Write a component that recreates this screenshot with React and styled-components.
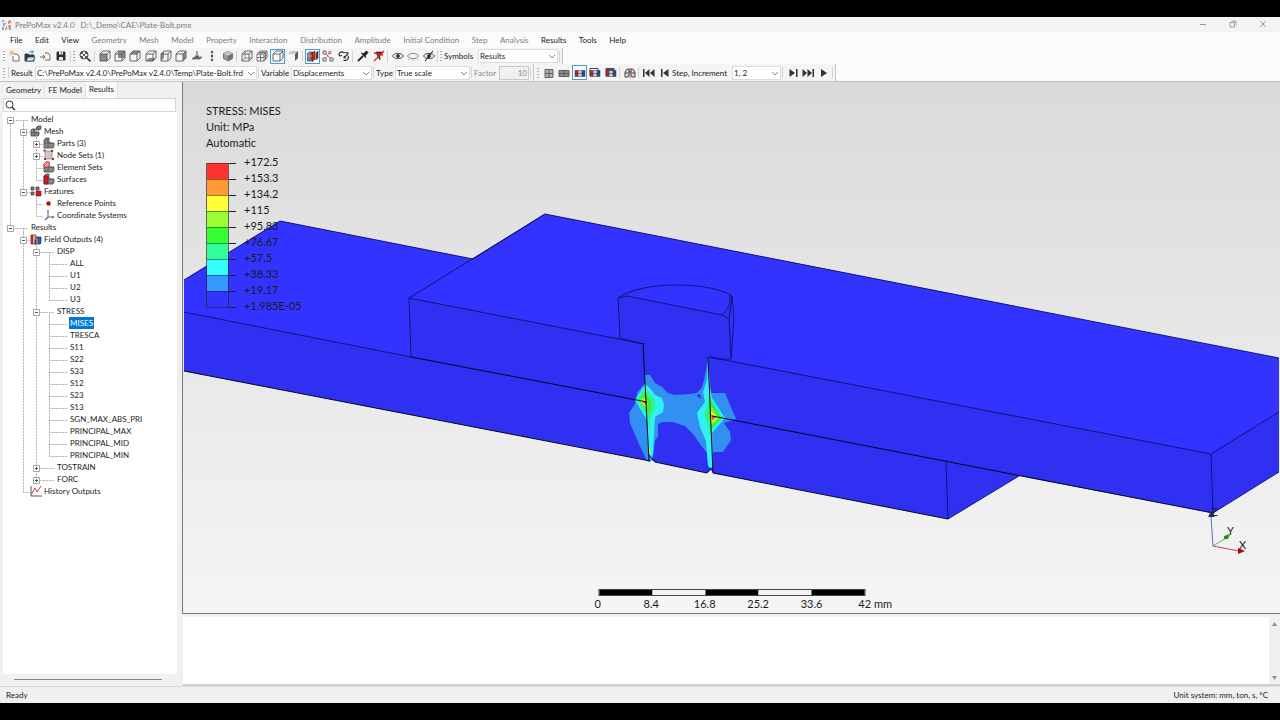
import React, { useState } from 'react';
import styled, { createGlobalStyle, css } from 'styled-components';

const GlobalStyle = createGlobalStyle`
  * {
    box-sizing: border-box;
  }

  body {
    margin: 0;
    background: #000;
  }

  body, button, input, select, textarea {
    font-family: Lato, "Open Sans", sans-serif;
    font-size: 8px;
    line-height: 12px;
    color: #1c1c1c;
  }
`;

const StyledPage = styled.div`
  min-height: 100vh;
  padding: 17px 0;
  display: flex;
  flex-direction: column;
  background: #000;
`;

const StyledWindow = styled.div`
  flex: 1;
  display: flex;
  flex-direction: column;
  background: #f0f0f0;
`;

/* title bar */

const StyledTitleBar = styled.header`
  height: 15px;
  padding: 0 2px;
  display: flex;
  align-items: center;
  background: #f3f3f3;
  color: #7c7c7c;
`;

const StyledTitle = styled.span`
  margin: 0 6px 0 3px;
  white-space: nowrap;
`;

const StyledWindowButtons = styled.div`
  margin-left: auto;
  display: flex;
`;

const StyledWindowButton = styled.button`
  width: 30px;
  height: 15px;
  padding: 0 0 2px;
  display: flex;
  align-items: center;
  justify-content: center;
  border: 0;
  background: none;
`;

/* menu */

const StyledMenuBar = styled.nav`
  height: 16px;
  padding: 0 4px;
  display: flex;
  align-items: center;
  background: #fbfbfb;
`;

const StyledMenuList = styled.div`
  width: 628px;
  display: flex;
  justify-content: space-between;
`;

const StyledMenuItem = styled.button`
  padding: 0 6px;
  border: 0;
  background: none;
  white-space: nowrap;
  color: #1c1c1c;

  &:disabled {
    color: #7d7d7d;
  }
`;

/* tool bars */

const StyledToolRow = styled.div`
  height: ${(props) => props.$height}px;
  display: flex;
  background: #fbfbfb;
`;

const StyledToolStrip = styled.div`
  display: flex;
  align-items: center;
  padding-left: 3px;
  background: #f4f4f4;
  border-right: 1px solid #c4c4c4;
`;

const StyledGrip = styled.span`
  width: 2px;
  height: 10px;
  margin: 0 2px 0 0;
  background: repeating-linear-gradient(#a8a8a8 0 1px, transparent 1px 3px);
`;

const StyledDivider = styled.span`
  width: 1px;
  height: 11px;
  margin: 0 2px 0 1px;
  background: #d2d2d2;
`;

const StyledGroup = styled.div`
  width: ${(props) => props.$width}px;
  display: flex;
  align-items: center;
  justify-content: space-between;
`;

const StyledToolButton = styled.button`
  width: 15px;
  height: 15px;
  padding: 0;
  display: flex;
  align-items: center;
  justify-content: center;
  border: 1px solid transparent;
  background: none;

  ${(props) =>
    props.$active &&
    css`
      border-color: #4a9fd0;
      background: #f4fafd;
    `}
`;

const StyledField = styled.label`
  display: flex;
  align-items: center;
  white-space: nowrap;
  color: ${(props) => (props.$muted ? '#8a8a8a' : '#1c1c1c')};
`;

const StyledFieldName = styled.span`
  width: ${(props) => props.$width}px;
`;

const StyledSelectBox = styled.span`
  width: ${(props) => props.$width}px;
  display: grid;
  align-items: center;

  > * {
    grid-area: 1 / 1;
  }

  > svg {
    justify-self: end;
    margin-right: 2px;
    pointer-events: none;
  }
`;

const StyledSelect = styled.select`
  width: 100%;
  height: 14px;
  padding: 0 8px 0 1px;
  appearance: none;
  border: 1px solid #dcdcdc;
  border-radius: 0;
  background: #fff;
`;

const StyledNumber = styled.input`
  width: 30px;
  height: 14px;
  padding: 0 1px;
  border: 1px solid #c8c8c8;
  background: #f0f0f0;
  text-align: right;
  color: #8a8a8a;
`;

/* main area */

const StyledMain = styled.main`
  flex: 1;
  min-height: 0;
  display: flex;
  border-top: 1px solid #c2c2c2;
`;

const StyledSide = styled.aside`
  width: 182px;
  padding: 0 5px 2px 3px;
  display: flex;
  flex-direction: column;
`;

const StyledTabs = styled.div`
  height: 16px;
  display: flex;
  align-items: flex-end;
`;

const StyledTab = styled.button`
  height: ${(props) => (props.$active ? 16 : 14)}px;
  padding: 0 3px ${(props) => (props.$active ? 3 : 2)}px;
  border: 0;
  border-right: 1px solid #e0e0e0;
  background: ${(props) => (props.$active ? '#fafafa' : '#f2f2f2')};
  white-space: nowrap;
`;

const StyledSearch = styled.label`
  height: 14px;
  padding: 0 1px;
  display: flex;
  align-items: center;
  background: #fff;
  border: 1px solid #d6d6d6;
  margin-right: 1px;
`;

const StyledSearchInput = styled.input`
  flex: 1;
  min-width: 0;
  height: 12px;
  border: 0;
  outline: 0;
  background: none;
`;

const StyledTree = styled.div`
  flex: 1;
  padding: 1px 0 0 1px;
  background: #fff;
`;

const StyledTreeRow = styled.div`
  height: 12px;
  display: flex;
`;

const down = 'repeating-linear-gradient(#b8b8b8 0 2px, #ececec 2px 3px)';
const across = 'repeating-linear-gradient(90deg, #b8b8b8 0 2px, #ececec 2px 3px)';

const guides = {
  none: 'none',
  through: `${down} 6px 0 / 1px 12px no-repeat`,
  tee: `${down} 6px 0 / 1px 12px no-repeat, ${across} 6px 7px / 7px 1px no-repeat`,
  end: `${down} 6px 0 / 1px 7px no-repeat, ${across} 6px 7px / 7px 1px no-repeat`,
  start: `${down} 6px 7px / 1px 5px no-repeat, ${across} 6px 7px / 7px 1px no-repeat`,
  stub: `${across} 0 7px / 11px 1px no-repeat`,
  stubDown: `${across} 0 7px / 11px 1px no-repeat, ${down} 6px 7px / 1px 5px no-repeat`,
};

const StyledGuide = styled.span`
  width: 13px;
  display: flex;
  justify-content: center;
  align-items: flex-end;
  padding-bottom: 1px;
  background: ${(props) => guides[props.$kind]};
`;

const StyledSlot = styled.span`
  width: 14px;
  display: flex;
  align-items: center;
  background: ${(props) => guides[props.$kind]};
`;

const StyledToggle = styled.button`
  width: 7px;
  height: 7px;
  padding: 0;
  display: flex;
  border: 0;
  background: #fff;
`;

const StyledTreeLabel = styled.button`
  height: 12px;
  padding: 0 1px;
  margin-left: -1px;
  border: 0;
  line-height: 11px;
  white-space: nowrap;
  background: ${(props) => (props.$selected ? '#0078d4' : 'none')};
  color: ${(props) => (props.$selected ? '#fff' : '#1c1c1c')};
`;

const StyledTreeScroll = styled.div`
  height: 10px;
  padding: 5px 15px 0 11px;
  background: #f1f1f1;

  &::before {
    content: "";
    display: block;
    height: 1px;
    background: #858585;
  }
`;

const StyledContent = styled.div`
  flex: 1;
  min-width: 0;
  display: flex;
  flex-direction: column;
`;

const StyledViewport = styled.section`
  flex: 1;
  min-height: 0;
  position: relative;
  display: flex;
  overflow: hidden;
  border-left: 1px solid #7a7a7a;
  border-bottom: 1px solid #7a7a7a;
  background: linear-gradient(#dadada, #f5f5f5);
  font-size: 11px;
  line-height: 16px;
`;

const StyledScene = styled.svg`
  width: 100%;
  height: auto;
  aspect-ratio: 1097 / 531;
`;

const StyledLegend = styled.div`
  position: absolute;
  left: 23px;
  top: 21px;
`;

const StyledLegendScale = styled.div`
  margin-top: 3px;
  display: flex;
`;

const StyledBands = styled.div`
  width: 23px;
  margin-top: 9px;
  align-self: flex-start;
  border: 1px solid #222a;
  border-top: 0;
`;

const StyledBand = styled.div`
  height: 16px;
  border-top: 1px solid #2228;
  background: ${(props) => props.$color};
`;

const StyledTicks = styled.div`
  width: 7px;
  margin: 9px 8px 0 0;
  align-self: flex-start;
`;

const StyledTick = styled.div`
  height: 16px;
  border-top: 1px solid #222;

  &:last-child {
    height: 1px;
  }
`;

const StyledLegendLabel = styled.div`
  height: 16px;
  color: #1a1a1a;
`;

const StyledRuler = styled.div`
  position: absolute;
  left: 50%;
  bottom: 1px;
  width: 267px;
  transform: translateX(-50%);
`;

const StyledRulerBar = styled.div`
  display: flex;
  height: 7px;
  border: 1px solid #444;
`;

const StyledRulerPart = styled.span`
  flex: 1;
  background: ${(props) => (props.$dark ? '#000' : '#f3f3f3')};
`;

const StyledRulerLabels = styled.div`
  display: flex;
  margin: 0 -27px;
`;

const StyledRulerLabel = styled.span`
  flex: 1;
  text-align: center;
  white-space: nowrap;

  &:last-child {
    text-indent: 20px;
    text-align: left;
  }
`;

const StyledLog = styled.div`
  height: 72px;
  padding: 3px 0 0 1px;
  display: flex;
`;

const StyledLogText = styled.textarea`
  flex: 1;
  border: 0;
  border-bottom: 2px solid #cfcfcf;
  resize: none;
  outline: 0;
  background: #fff;
`;

const StyledLogScroll = styled.div`
  width: 11px;
  padding: 4px 0 3px;
  display: flex;
  flex-direction: column;
  align-items: center;
  justify-content: space-between;
  border-bottom: 2px solid #cfcfcf;
  background: #f0f0f0;
`;

const StyledStatus = styled.footer`
  height: 17px;
  padding: 0 12px 0 6px;
  display: flex;
  justify-content: space-between;
  line-height: 16px;
  border-top: 1px solid #d9d9d9;
  background: #f0f0f0;
`;

/* icons */

const Icon = ({ size = 12, children }) => (
  <svg width={size} height={size} viewBox="0 0 12 12" fill="none" stroke="#585858" strokeWidth="0.9">
    {children}
  </svg>
);

const faces = {
  front: '1,4 8,4 8,11 1,11',
  back: '4,1 11,1 11,8 4,8',
  top: '1,4 4,1 11,1 8,4',
  bottom: '1,11 4,8 11,8 8,11',
  left: '1,4 4,1 4,8 1,11',
  right: '8,4 11,1 11,8 8,11',
};

const Cube = ({ face, hidden }) => (
  <Icon>
    {face && <polygon points={faces[face]} fill="#8b8b8b" stroke="none" />}
    {hidden && <path d="M4 1v7h7M4 8l-3 3" strokeWidth="0.7" />}
    <path d="M1 4h7v7H1zM1 4l3-3h7v7l-3 3M8 4l3-3" />
  </Icon>
);

const NewIcon = () => (
  <Icon>
    <path d="M5 4h3l2 2v5H4V6" fill="#fff" />
    <path d="M3 0v5M0 3h5M1 1l4 4M5 1L1 5" stroke="#e8a33d" strokeWidth="0.7" />
  </Icon>
);

const OpenIcon = () => (
  <Icon>
    <path d="M1 4h3l1 1h5v6H1z" fill="#2e3942" stroke="#2e3942" />
    <path d="M2 11l2-4h7l-2 4z" fill="#d7e3ea" stroke="#2e3942" strokeWidth="0.7" />
    <path d="M5 3c1-2 3-2 4-1M9 0v3H7" stroke="#2b8fc9" />
  </Icon>
);

const ImportIcon = () => (
  <Icon>
    <path d="M5 3h3l2 2v5H5M0 7h5M3 5l2 2-2 2" />
  </Icon>
);

const SaveIcon = () => (
  <Icon>
    <path d="M2 2h8v8H2z" fill="#2c2c2c" stroke="#2c2c2c" />
    <path d="M4 1.500h4v3H4zM4 7h4v3H4z" fill="#e9e9e9" stroke="none" />
    <path d="M6.500 2v2" strokeWidth="0.8" />
  </Icon>
);

const ZoomIcon = () => (
  <Icon>
    <circle cx="5" cy="5" r="4" stroke="#333" />
    <path d="M8 8l3.500 3.500" stroke="#333" strokeWidth="1.600" />
    <path d="M2.500 4V2.500H4M6 2.500h1.500V4M7.500 6v1.500H6M4 7.500H2.500V6M3 3l4 4M7 3L3 7" stroke="#333" strokeWidth="0.8" />
  </Icon>
);

const NormalIcon = () => (
  <Icon>
    <path d="M1 9l2-2h8l-2 2z" fill="#777" strokeWidth="0.7" />
    <path d="M6 1v6M4.500 5.500L6 7.500l1.500-2" stroke="#333" />
  </Icon>
);

const VerticalIcon = () => (
  <Icon>
    <path d="M5 1h2v2H5zM5 5h2v2H5zM5 9h2v2H5z" fill="#4a4a4a" stroke="none" />
    <path d="M6 1v10" strokeWidth="0.500" />
  </Icon>
);

const IsoIcon = () => (
  <Icon>
    <path d="M6 1l4.500 2.500v5L6 11 1.500 8.500v-5z" fill="#9a9a9a" strokeWidth="0.7" />
    <path d="M6 1l4.500 2.500L6 6 1.500 3.500z" fill="#c4c4c4" stroke="none" />
    <path d="M6 6l4.500-2.500v5L6 11z" fill="#707070" stroke="none" />
  </Icon>
);

const MeshCubeIcon = () => (
  <Icon>
    <path d="M1 4h7v7H1zM1 4l3-3h7v7l-3 3M8 4l3-3M4.500 4v7M1 7.500h7M2.500 2.500h7v7M4.500 4l3-3M8 7.500l3-3" strokeWidth="0.8" />
  </Icon>
);

const ShadedIcon = () => (
  <Icon>
    <path d="M1 4l3-3h7L8 4z" fill="#c9c9c9" stroke="none" />
    <path d="M8 4l3-3v7l-3 3z" fill="#5c5c5c" stroke="none" />
    <path d="M1 4h7v7H1z" fill="#f6f6f6" stroke="none" />
  </Icon>
);

const SectionIcon = () => (
  <Icon>
    <path d="M0 4l2-2h4v7l-2 2H0z" fill="#6c6c6c" stroke="#444" strokeWidth="0.600" />
    <path d="M5 3l3-2v8l-3 3z" fill="#cf2020" stroke="#7d1010" strokeWidth="0.600" />
    <path d="M9 3l2-2v7l-2 2z" fill="#7d2020" stroke="#444" strokeWidth="0.600" />
    <path d="M2 2v9M0 6h5" stroke="#ddd" strokeWidth="0.500" />
  </Icon>
);

const ExplodedIcon = () => (
  <Icon>
    <path d="M1 1h3v3H1zM1 8h3v3H1zM8 8h3v3H8z" />
    <path d="M4 4l4 4M4.500 7.500L7 3M7 1.500h2v2H7z" stroke="#c33" strokeWidth="0.700" />
  </Icon>
);

const LinkIcon = () => (
  <Icon>
    <path d="M1.500 6C0 3 3 1 5.500 2.500M1.500 6L4 5.500M5.500 2.500L10 3C10 6 7 5.500 5.500 7.500M10 6c1.500 3-2 5.500-4.500 4M5.500 7.500L8 8" stroke="#222" strokeWidth="1.100" />
  </Icon>
);

const PickerIcon = () => (
  <Icon>
    <path d="M1 11l5-5" stroke="#222" strokeWidth="1.800" />
    <path d="M6 4l2 2 3-3.500L9.500 1z" fill="#222" stroke="#222" />
    <path d="M4.500 3l4.500 4.500" stroke="#222" strokeWidth="1.300" />
  </Icon>
);

const PickerOffIcon = () => (
  <Icon>
    <path d="M3 2h7L7 6v4L5 7z" fill="#333" stroke="#333" strokeWidth="0.600" />
    <path d="M1 11L11 1M1 3l9 2" stroke="#e02020" strokeWidth="1.300" />
  </Icon>
);

const EyeIcon = ({ kind }) => (
  <Icon>
    <path d="M0.500 6C2.500 2.500 9.500 2.500 11.500 6 9.500 9.500 2.500 9.500 0.500 6z" stroke={kind === 'empty' ? '#777' : '#333'} />
    {kind !== 'empty' && <circle cx="6" cy="6" r="1.500" fill="#333" stroke="#333" />}
    {kind === 'empty' && <path d="M2 9l-1 1M6 9.500v1M10 9l1 1" stroke="#777" strokeWidth="0.600" />}
    {kind === 'off' && <path d="M2 11l8-10" stroke="#333" strokeWidth="1.100" />}
  </Icon>
);

const GridIcon = ({ wide }) => (
  <Icon>
    <path
      d={wide ? 'M1 3.500h10v6H1zM1 6.500h10M6 3.500v6' : 'M2 2.500h8v8H2zM2 6.500h8M6 2.500v8'}
      fill={wide ? '#8e8e8e' : '#b5b5b5'}
      stroke="#555"
    />
  </Icon>
);

const ContourIcon = ({ kind }) => (
  <Icon>
    {kind === 'outline' && <path d="M1 1.500h8v7H1z" fill="#fff" stroke="#333" />}
    {kind === 'solid' && <path d="M0.500 1h9v8h-9z" fill="#4e4e4e" stroke="none" />}
    <path d="M1 3.500h3v6H1z" fill="#c8262c" stroke="none" />
    <path d="M4 3.500h4v6H4z" fill="#c9c9e8" stroke="none" />
    <path d="M8 3.500h3v6H8z" fill="#3344a8" stroke="none" />
    <path d="M1 3.500h10v6H1zM1 6.500h10M4 3.500v6M8 3.500v6" stroke="#333" strokeWidth="0.500" />
  </Icon>
);

const SplitIcon = () => (
  <Icon>
    <path d="M1 5l2-3h2v6l-1 2H1z" fill="#d6e0f0" stroke="#333" />
    <path d="M11 5L9 2H7v6l1 2h3z" fill="#d6e0f0" stroke="#333" />
    <path d="M1 6h3M8 6h3" stroke="#333" />
    <path d="M6 1v10M4 5h4" stroke="#b03030" strokeWidth="0.800" />
  </Icon>
);

const playPaths = {
  first: 'M0 2h1.500v8H0zM6.500 2v8l-4.500-4zM11.500 2v8L7 6z',
  previous: 'M2 2h1.500v8H2zM9.500 2v8L4 6z',
  next: 'M9 2h1.500v8H9zM2.500 2v8L8 6z',
  last: 'M10.500 2H12v8h-1.500zM5.500 2v8L10 6zM0.500 2v8L5 6z',
  play: 'M3 2v8l6-4z',
};

const PlayIcon = ({ kind }) => (
  <Icon>
    <path d={playPaths[kind]} fill="#333" stroke="none" />
  </Icon>
);

const Chevron = () => (
  <svg width="8" height="8" viewBox="0 0 8 8" fill="none" stroke="#666" strokeWidth="0.8">
    <path d="M1 3l3 3 3-3" />
  </svg>
);

const Logo = () => (
  <svg width="10" height="12" viewBox="0 0 10 12">
    <path d="M0 1h2v2H0zM1 4h2v3H1zM0 8h2v3H0zM3 9h1v2H3z" fill="#7fa3d8" />
    <path d="M6 2c1 0 2-1 3-1v3L6 5zM6 6h3v5H7zM4 7h1v3H4z" fill="#e08a82" />
    <path d="M3 2h1v3H3zM5 9h1v2H5z" fill="#e9c9a0" />
  </svg>
);

const SearchIcon = () => (
  <svg width="11" height="11" viewBox="0 0 11 11" fill="none" stroke="#333">
    <circle cx="4.500" cy="4.500" r="3.500" />
    <path d="M7 7l3 3" strokeWidth="1.500" />
  </svg>
);

const blocks = (
  <>
    <path d="M1 3l2-2h3v5h5v3l-1 2H1z" fill="#8a8a8a" stroke="#444" strokeWidth="0.800" />
    <path d="M1 6h8M5 3v8M1 3h4" stroke="#444" strokeWidth="0.600" />
  </>
);

const treeIcons = {
  mesh: (
    <>
      <path d="M1 5l1-1h3v3h4v3l-1 1H1zM6 3l2-2h3v3L9 5H6z" fill="#8a8a8a" stroke="#444" strokeWidth="0.800" />
      <path d="M1 8h7M4 5v6M6 3h3v2" stroke="#444" strokeWidth="0.600" />
    </>
  ),
  parts: blocks,
  nodes: (
    <>
      <path d="M2 2h7v8H2z" fill="#c9c9c9" stroke="#888" strokeWidth="0.800" />
      <path d="M0.500 0.500h2v2h-2zM8 1h2v2H8zM1 9h2v2H1zM9 9h2v2H9z" fill="#c21f26" stroke="none" />
    </>
  ),
  elements: (
    <>
      {blocks}
      <path d="M1 3l2-2h3v5H1z" fill="#f09a9a" stroke="#d03030" strokeWidth="0.800" />
    </>
  ),
  surfaces: (
    <>
      {blocks}
      <path d="M1 3h4v8H1z" fill="#c21f26" stroke="#7e1014" strokeWidth="0.600" />
    </>
  ),
  features: (
    <>
      <path d="M1 2h3v3H1zM6 2h3v3H6zM1 7h3v3H1z" fill="#777" stroke="#444" strokeWidth="0.800" />
      <path d="M6 6h5v5H6z" fill="#d2161e" stroke="#7e1014" strokeWidth="0.600" />
    </>
  ),
  point: <circle cx="5.500" cy="6.500" r="2.200" fill="#b3121a" stroke="none" />,
  axes: (
    <>
      <path d="M5 8V2M5 8h5" stroke="#555" />
      <path d="M5 8l-3 3" stroke="#3565c4" strokeWidth="1.300" />
      <path d="M4 3l1-3 1 3z" fill="#4d9c4d" stroke="none" />
      <path d="M9 7l3 1-3 1.500z" fill="#c33" stroke="none" />
    </>
  ),
  field: (
    <>
      <path d="M1 2h5v9H1z" fill="#e8b48a" stroke="#823" strokeWidth="0.800" />
      <path d="M1 2h2v9H1z" fill="#c21f26" stroke="none" />
      <path d="M5 6l2-2h4v6l-1 1H5z" fill="#3f55ad" stroke="#223" strokeWidth="0.700" />
      <path d="M5 6h2v5" stroke="#bcd" strokeWidth="0.700" />
    </>
  ),
  history: (
    <>
      <path d="M1 1v10h11" stroke="#444" />
      <path d="M1.500 9L5 3l2 4 4-6" stroke="#c8262c" />
    </>
  ),
};

/* data */

const menu = [
  ['File', true], ['Edit', true], ['View', true], ['Geometry'], ['Mesh'], ['Model'], ['Property'],
  ['Interaction'], ['Distribution'], ['Amplitude'], ['Initial Condition'], ['Step'], ['Analysis'],
  ['Results', true], ['Tools', true], ['Help', true],
];

const leaf = (name) => ({ name });

const tree = [
  {
    name: 'Model',
    children: [
      {
        name: 'Mesh',
        icon: 'mesh',
        children: [
          { name: 'Parts (3)', icon: 'parts', collapsed: true },
          { name: 'Node Sets (1)', icon: 'nodes', collapsed: true },
          { name: 'Element Sets', icon: 'elements' },
          { name: 'Surfaces', icon: 'surfaces' },
        ],
      },
      {
        name: 'Features',
        icon: 'features',
        children: [
          { name: 'Reference Points', icon: 'point' },
          { name: 'Coordinate Systems', icon: 'axes' },
        ],
      },
    ],
  },
  {
    name: 'Results',
    children: [
      {
        name: 'Field Outputs (4)',
        icon: 'field',
        children: [
          { name: 'DISP', children: ['ALL', 'U1', 'U2', 'U3'].map(leaf) },
          {
            name: 'STRESS',
            children: [
              'MISES', 'TRESCA', 'S11', 'S22', 'S33', 'S12', 'S23', 'S13', 'SGN_MAX_ABS_PRI',
              'PRINCIPAL_MAX', 'PRINCIPAL_MID', 'PRINCIPAL_MIN',
            ].map(leaf),
          },
          { name: 'TOSTRAIN', collapsed: true },
          { name: 'FORC', collapsed: true },
        ],
      },
      { name: 'History Outputs', icon: 'history' },
    ],
  },
];

const bands = ['#ff3333', '#ff9933', '#ffff33', '#99ff33', '#33ff33', '#33ff99', '#33ffff', '#3399ff', '#3333ff'];
const values = ['+172.5', '+153.3', '+134.2', '+115', '+95.83', '+76.67', '+57.5', '+38.33', '+19.17', '+1.985E-05'];

/* parts */

const Tool = ({ label, active, children }) => (
  <StyledToolButton type="button" aria-label={label} title={label} $active={active}>
    {children}
  </StyledToolButton>
);

const SelectField = ({ label, labelWidth, width, value }) => (
  <StyledField>
    <StyledFieldName $width={labelWidth}>{label}</StyledFieldName>
    <StyledSelectBox $width={width}>
      <StyledSelect defaultValue={value}>
        <option>{value}</option>
      </StyledSelect>
      <Chevron />
    </StyledSelectBox>
  </StyledField>
);

const TreeNode = ({ node, trail, first, last, selected, onSelect }) => {
  const [open, setOpen] = useState(!node.collapsed);
  const expandable = node.children || node.collapsed;
  const kind = trail.length === 0 && first ? 'start' : last ? 'end' : 'tee';
  const slot = node.icon ? 'none' : node.children && open ? 'stubDown' : 'stub';

  return (
    <>
      <StyledTreeRow>
        {trail.map((more, i) => (
          <StyledGuide key={i} $kind={more ? 'through' : 'none'} />
        ))}
        <StyledGuide $kind={kind}>
          {expandable && (
            <StyledToggle type="button" aria-label={`Toggle ${node.name}`} onClick={() => setOpen(!open)}>
              <svg width="7" height="7" viewBox="0 0 7 7" fill="none" stroke="#a4a4a4">
                <path d="M0.500 0.500h6v6h-6z" />
                <path d={open ? 'M2 3.500h3' : 'M2 3.500h3M3.500 2v3'} stroke="#555" />
              </svg>
            </StyledToggle>
          )}
        </StyledGuide>
        <StyledSlot $kind={slot}>{node.icon && <Icon>{treeIcons[node.icon]}</Icon>}</StyledSlot>
        <StyledTreeLabel type="button" $selected={selected === node.name} onClick={() => onSelect(node.name)}>
          {node.name}
        </StyledTreeLabel>
      </StyledTreeRow>
      {open &&
        node.children &&
        node.children.map((child, i) => (
          <TreeNode
            key={child.name}
            node={child}
            trail={[...trail, !last]}
            last={i === node.children.length - 1}
            selected={selected}
            onSelect={onSelect}
          />
        ))}
    </>
  );
};

const Scene = () => (
  <StyledScene viewBox="183 82 1097 531" role="img" aria-label="Plate and bolt section">
    <g strokeLinejoin="round">
      <path d="M184 280L280 221 473 259 545 214 1279 358V472L1213 513 1019 476 948 519 713 473 711 470 707 473 655 462 650 459V461L184 371z" fill="#3030f2" />
      <path d="M184 280L280 221 473 259 409 298 411 357 184 312z" fill="#3333ff" />
      <path d="M409 298L545 214 1279 358V412L1211 454 731 360 732 296C715 282 640 282 618 298L620 338z" fill="#3333ff" />
      <path d="M627 297C650 282 712 282 730 296 731 305 727 311 722 315z" fill="#3333ff" />

      <path d="M645 375l5 0 5 8 7 4 6 6 7 2 15-1 7-1 5-6 2-7 3-15 1-8 3 36 14 0 11 26-12 4 6 9 1 8-8 12-8 0-2 1v15h-4l-2-15-7-9-7-10-8-8-12-4-11 0-4 2v12l-3 5-2 17-3 4-3-1-8-17-9-21-1-10 6-9 2-11 8-10z" fill="#3190f2" />
      <path d="M697 395l3-1 1 5-3-2z" fill="#3030f2" />
      <path d="M645 384l5 4 5 7 7 3 2 7-1 7-8 5-2 36-2 6-3-6-1-33-12-20z" fill="#30f2f2" />
      <path d="M708 358l2 30 2 10 13 20-13 15 1 32-2 3-3-2-2-25-6-14-3-14 8-11-2-10 4-12z" fill="#30f2f2" />
      <path d="M645 388l6 7 4 5v8l-4 9-1 18-2-17-11-18z" fill="#30f291" />
      <path d="M709 390l3 11 11 17-11 12-1 16-2-16-5-16 4-10z" fill="#30f291" />
      <path d="M645 392l4 6 3 6-3 10-10-14z" fill="#30f230" />
      <path d="M711 401l10 17-9 9-4-11z" fill="#30f230" />
      <path d="M639 400l6-3 3 6-1 7z" fill="#91f230" />
      <path d="M711 406l8 12-7 7-2-9z" fill="#91f230" />
      <path d="M640 401l6-1 1 7z" fill="#f2f230" />
      <path d="M711 411l6 7-6 5z" fill="#f2f230" />
      <path d="M642 401.500l5 1v3z" fill="#f23030" />
      <path d="M711 414.500l5 3-4 3z" fill="#f25a30" />
      <path d="M649 446l2 6-2 3z" fill="#c8f230" />

      <g fill="none" stroke="#10106e" strokeWidth="0.9">
        <path d="M184 280L280 221 473 259M184 312L411 357M545 214L409 298 411 357M409 298L644 344M473 259L545 214 1279 358" />
        <path d="M1279 412L1211 454 1213 513 1279 472M709 357L1211 454M946 461L948 519 1019 476" />
        <path d="M618 298C640 281 710 281 732 296L734 320 731 359M618 298L620 338 631 341 644 344M618 298L627 296 722 315 729 319 731 358M732 296L729 319M730 294C731 303 728 310 722 315M709 357L720 359 731 359" />
      </g>
      <g fill="none" stroke="#06061e" strokeWidth="1">
        <path d="M184 371L650 461M411 357L647 402M643 343L649 461M649 455L655 462 707 473 711 468M708 357L713 473 948 519M712 416L1213 513" />
      </g>
    </g>
    <path d="M1213 546L1211 516" stroke="#5560b0" fill="none" strokeWidth="0.9" />
    <path d="M1208 517l3-6 4 5-1 1z" fill="#22307c" />
    <path d="M1213 546l13-8" stroke="#3fae3f" fill="none" strokeWidth="0.9" />
    <path d="M1224 536l6-2-2 5-4 0z" fill="#109a18" />
    <path d="M1213 546l26 5" stroke="#c03040" fill="none" strokeWidth="0.9" />
    <path d="M1238 548l7 3-7 3z" fill="#b3001b" />
    <g fontSize="11" fill="#222">
      <text x="1211" y="516">Z</text>
      <text x="1227" y="535">Y</text>
      <text x="1239" y="549">X</text>
    </g>
  </StyledScene>
);

const Legend = () => (
  <StyledLegend>
    <div>STRESS: MISES</div>
    <div>Unit: MPa</div>
    <div>Automatic</div>
    <StyledLegendScale>
      <StyledBands>
        {bands.map((color) => (
          <StyledBand key={color} $color={color} />
        ))}
      </StyledBands>
      <StyledTicks>
        {values.map((value) => (
          <StyledTick key={value} />
        ))}
      </StyledTicks>
      <div>
        {values.map((value) => (
          <StyledLegendLabel key={value}>{value}</StyledLegendLabel>
        ))}
      </div>
    </StyledLegendScale>
  </StyledLegend>
);

const Ruler = () => (
  <StyledRuler>
    <StyledRulerBar>
      {[0, 1, 2, 3, 4].map((i) => (
        <StyledRulerPart key={i} $dark={i % 2 === 0} />
      ))}
    </StyledRulerBar>
    <StyledRulerLabels>
      {['0', '8.4', '16.8', '25.2', '33.6', '42 mm'].map((value) => (
        <StyledRulerLabel key={value}>{value}</StyledRulerLabel>
      ))}
    </StyledRulerLabels>
  </StyledRuler>
);

const App = () => {
  const [selected, setSelected] = useState('MISES');
  const [tab, setTab] = useState('Results');

  return (
    <StyledPage>
      <GlobalStyle />
      <StyledWindow>
        <StyledTitleBar>
          <Logo />
          <StyledTitle>PrePoMax v2.4.0</StyledTitle>
          <span>D:\_Demo\CAE\Plate-Bolt.pmx</span>
          <StyledWindowButtons>
            <StyledWindowButton type="button" aria-label="Minimize">
              <svg width="8" height="8" viewBox="0 0 8 8"><path d="M1 4.500h6" stroke="#999" /></svg>
            </StyledWindowButton>
            <StyledWindowButton type="button" aria-label="Restore">
              <svg width="8" height="8" viewBox="0 0 8 8" fill="none" stroke="#888"><path d="M1 2.500h4.500V7H1zM2.500 1H7v4.500" strokeWidth="0.8" /></svg>
            </StyledWindowButton>
            <StyledWindowButton type="button" aria-label="Close">
              <svg width="8" height="8" viewBox="0 0 8 8" stroke="#888"><path d="M1 1l6 6M7 1L1 7" strokeWidth="0.8" /></svg>
            </StyledWindowButton>
          </StyledWindowButtons>
        </StyledTitleBar>

        <StyledMenuBar>
          <StyledMenuList>
            {menu.map(([name, enabled]) => (
              <StyledMenuItem key={name} type="button" disabled={!enabled}>{name}</StyledMenuItem>
            ))}
          </StyledMenuList>
        </StyledMenuBar>

        <StyledToolRow $height={16}>
          <StyledToolStrip>
            <StyledGrip />
            <StyledGroup $width={62}>
              <Tool label="New"><NewIcon /></Tool>
              <Tool label="Open"><OpenIcon /></Tool>
              <Tool label="Import"><ImportIcon /></Tool>
              <Tool label="Save"><SaveIcon /></Tool>
            </StyledGroup>
            <StyledDivider />
            <StyledGrip />
            <StyledGroup $width={16}>
              <Tool label="Zoom to fit"><ZoomIcon /></Tool>
            </StyledGroup>
            <StyledDivider />
            <StyledGroup $width={138}>
              <Tool label="Front view"><Cube face="front" /></Tool>
              <Tool label="Back view"><Cube face="back" /></Tool>
              <Tool label="Top view"><Cube face="top" /></Tool>
              <Tool label="Bottom view"><Cube face="bottom" /></Tool>
              <Tool label="Left view"><Cube face="left" /></Tool>
              <Tool label="Right view"><Cube face="right" /></Tool>
              <Tool label="Normal view"><NormalIcon /></Tool>
              <Tool label="Vertical view"><VerticalIcon /></Tool>
              <Tool label="Isometric view"><IsoIcon /></Tool>
            </StyledGroup>
            <StyledDivider />
            <StyledGroup $width={62}>
              <Tool label="Wireframe"><Cube hidden /></Tool>
              <Tool label="Element edges"><MeshCubeIcon /></Tool>
              <Tool label="Model edges" active><Cube /></Tool>
              <Tool label="No edges"><ShadedIcon /></Tool>
            </StyledGroup>
            <StyledDivider />
            <StyledGroup $width={46}>
              <Tool label="Section view" active><SectionIcon /></Tool>
              <Tool label="Exploded view"><ExplodedIcon /></Tool>
              <Tool label="Follow view"><LinkIcon /></Tool>
            </StyledGroup>
            <StyledDivider />
            <StyledGroup $width={31}>
              <Tool label="Query"><PickerIcon /></Tool>
              <Tool label="Remove annotations"><PickerOffIcon /></Tool>
            </StyledGroup>
            <StyledDivider />
            <StyledGroup $width={46}>
              <Tool label="Show all"><EyeIcon /></Tool>
              <Tool label="Hide all"><EyeIcon kind="empty" /></Tool>
              <Tool label="Invert visible"><EyeIcon kind="off" /></Tool>
            </StyledGroup>
            <StyledDivider />
            <StyledGrip />
            <SelectField label="Symbols" labelWidth={34} width={80} value="Results" />
            <StyledDivider />
          </StyledToolStrip>
        </StyledToolRow>

        <StyledToolRow $height={17}>
          <StyledToolStrip>
            <StyledGrip />
            <StyledDivider />
            <SelectField
              label="Result"
              labelWidth={24}
              width={222}
              value="C:\PrePoMax v2.4.0\PrePoMax v2.4.0\Temp\Plate-Bolt.frd"
            />
            <StyledDivider />
            <SelectField label="Variable" labelWidth={30} width={81} value="Displacements" />
            <StyledDivider />
            <SelectField label="Type" labelWidth={19} width={75} value="True scale" />
            <StyledDivider />
            <StyledField $muted>
              <StyledFieldName $width={25}>Factor</StyledFieldName>
              <StyledNumber defaultValue="10" disabled />
            </StyledField>
            <StyledDivider />
          </StyledToolStrip>
          <StyledToolStrip>
            <StyledGrip />
            <StyledGroup $width={77}>
              <Tool label="Undeformed"><GridIcon /></Tool>
              <Tool label="Deformed"><GridIcon wide /></Tool>
              <Tool label="Contours" active><ContourIcon /></Tool>
              <Tool label="Contours with wireframe"><ContourIcon kind="outline" /></Tool>
              <Tool label="Contours with solid"><ContourIcon kind="solid" /></Tool>
            </StyledGroup>
            <StyledDivider />
            <StyledGroup $width={15}>
              <Tool label="Transformation"><SplitIcon /></Tool>
            </StyledGroup>
            <StyledDivider />
            <StyledGroup $width={31}>
              <Tool label="First increment"><PlayIcon kind="first" /></Tool>
              <Tool label="Previous increment"><PlayIcon kind="previous" /></Tool>
            </StyledGroup>
            <SelectField label="Step, Increment" labelWidth={60} width={49} value="1, 2" />
            <StyledDivider />
            <StyledGroup $width={46}>
              <Tool label="Next increment"><PlayIcon kind="next" /></Tool>
              <Tool label="Last increment"><PlayIcon kind="last" /></Tool>
              <Tool label="Animate"><PlayIcon kind="play" /></Tool>
            </StyledGroup>
            <StyledDivider />
          </StyledToolStrip>
        </StyledToolRow>

        <StyledMain>
          <StyledSide>
            <StyledTabs role="tablist">
              {['Geometry', 'FE Model', 'Results'].map((name) => (
                <StyledTab
                  key={name}
                  type="button"
                  role="tab"
                  aria-selected={tab === name}
                  $active={tab === name}
                  onClick={() => setTab(name)}
                >
                  {name}
                </StyledTab>
              ))}
            </StyledTabs>
            <StyledSearch>
              <SearchIcon />
              <StyledSearchInput type="text" aria-label="Search" />
            </StyledSearch>
            <StyledTree>
              {tree.map((node, i) => (
                <TreeNode
                  key={node.name}
                  node={node}
                  trail={[]}
                  first={i === 0}
                  last={i === tree.length - 1}
                  selected={selected}
                  onSelect={setSelected}
                />
              ))}
            </StyledTree>
            <StyledTreeScroll />
          </StyledSide>

          <StyledContent>
            <StyledViewport>
              <Scene />
              <Legend />
              <Ruler />
            </StyledViewport>
            <StyledLog>
              <StyledLogText readOnly aria-label="Output" />
              <StyledLogScroll>
                <svg width="7" height="6" viewBox="0 0 7 6"><path d="M3.500 1L6 5H1z" fill="#8f8f8f" /></svg>
                <svg width="7" height="6" viewBox="0 0 7 6"><path d="M3.500 5L6 1H1z" fill="#8f8f8f" /></svg>
              </StyledLogScroll>
            </StyledLog>
          </StyledContent>
        </StyledMain>

        <StyledStatus>
          <span>Ready</span>
          <span>Unit system: mm, ton, s, °C</span>
        </StyledStatus>
      </StyledWindow>
    </StyledPage>
  );
};

export default App;
